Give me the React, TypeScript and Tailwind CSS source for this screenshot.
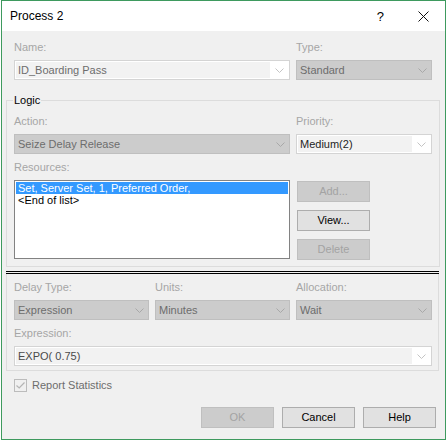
import React from "react";

type ComboKind = "disabled" | "white";

function Chevron({ color }: { color: string }) {
  return (
    <svg width="9" height="5" viewBox="0 0 9 5" className="shrink-0">
      <path d="M0.5 0.5 L4.5 4.5 L8.5 0.5" fill="none" stroke={color} strokeWidth="1" />
    </svg>
  );
}

function Combo({ text, kind, w, textColor }: { text: string; kind: ComboKind; w: string; textColor?: string }) {
  if (kind === "disabled") {
    return (
      <div className={`${w} h-[20px] shrink-0 border border-[#bfbfbf] bg-[#cccccc] flex items-center`}>
        <span className="flex-1 pl-[3px] text-[#6d6d6d] truncate">{text}</span>
        <div className="w-[18px] flex justify-center">
          <Chevron color="#a8a8a8" />
        </div>
      </div>
    );
  }
  return (
    <div className={`${w} h-[20px] shrink-0 border border-[#d4d4d4] bg-white flex items-center p-[1px]`}>
      <span className={`flex-1 h-full bg-[#f2f2f2] pl-[2px] flex items-center truncate ${textColor ?? "text-[#1e1e1e]"}`}>
        {text}
      </span>
      <div className="w-[18px] flex justify-center">
        <Chevron color="#c4c4c4" />
      </div>
    </div>
  );
}

function Btn({ label, disabled }: { label: string; disabled?: boolean }) {
  return (
    <div
      className={
        disabled
          ? "w-[73px] h-[21px] shrink-0 border border-[#bfbfbf] bg-[#cccccc] text-[#a3a3a3] flex items-center justify-center"
          : "w-[73px] h-[21px] shrink-0 border border-[#adadad] bg-[#e1e1e1] text-black flex items-center justify-center"
      }
    >
      {label}
    </div>
  );
}

function Label({ children }: { children: React.ReactNode }) {
  return <div className="h-[13px] leading-[13px] text-[#a6a6a6]">{children}</div>;
}

export default function App() {
  return (
    <div className="w-[447px] h-[442px] bg-white text-[11px] leading-[13px]" style={{ fontFamily: '"Liberation Sans", Arial, sans-serif' }}>
      <div className="ml-[1px] w-[445px] h-[440px] border border-[#3e9a5e] flex flex-col">
        {/* title bar */}
        <div className="h-[30px] bg-white flex items-center pl-[8px] pr-[16px]">
          <span className="text-[12px] text-black">Process 2</span>
          <span className="ml-auto text-[13px] text-black">?</span>
          <svg width="11" height="11" viewBox="0 0 11 11" className="ml-[34px]">
            <path d="M0.5 0.5 L10.5 10.5 M10.5 0.5 L0.5 10.5" stroke="#111" strokeWidth="1" />
          </svg>
        </div>

        <div className="flex-1 bg-[#f0f0f0] flex flex-col">
          {/* name / type */}
          <div className="pl-[12px] pt-[10px] flex gap-[6px]">
            <div className="flex flex-col gap-[6px]">
              <Label>Name:</Label>
              <Combo text="ID_Boarding Pass" kind="white" w="w-[276px]" textColor="text-[#6d6d6d]" />
            </div>
            <div className="flex flex-col gap-[6px]">
              <Label>Type:</Label>
              <Combo text="Standard" kind="disabled" w="w-[136px]" />
            </div>
          </div>

          {/* logic group */}
          <fieldset className="ml-[4px] mt-[14px] w-[433px] border border-[#dcdcdc] px-[7px] pb-[6px]">
            <legend className="h-[13px] leading-[13px] text-black px-[1px] -ml-[1px]">Logic</legend>
            <div className="mt-[8px] flex gap-[6px]">
              <div className="flex flex-col gap-[6px]">
                <Label>Action:</Label>
                <Combo text="Seize Delay Release" kind="disabled" w="w-[276px]" />
              </div>
              <div className="flex flex-col gap-[6px]">
                <Label>Priority:</Label>
                <Combo text="Medium(2)" kind="white" w="w-[136px]" />
              </div>
            </div>
            <div className="mt-[7px]">
              <Label>Resources:</Label>
            </div>
            <div className="mt-[6px] flex">
              <div className="w-[276px] h-[79px] border border-[#828282] bg-white p-[1px]">
                <div className="h-[12px] leading-[12px] bg-[#3399ff] text-white pl-[2px]">Set, Server Set, 1, Preferred Order,</div>
                <div className="h-[13px] leading-[13px] text-black pl-[2px]">&lt;End of list&gt;</div>
              </div>
              <div className="ml-[7px] pt-[1px] flex flex-col gap-[8px]">
                <Btn label="Add..." disabled />
                <Btn label="View..." />
                <Btn label="Delete" disabled />
              </div>
            </div>
          </fieldset>

          {/* double separator */}
          <div className="ml-[4px] mt-[4px] w-[433px] h-[3px] border-y border-black" />

          {/* delay group */}
          <div className="ml-[4px] w-[433px] border-x border-b border-[#dcdcdc] px-[7px] pt-[7px] pb-[4px]">
            <div className="flex gap-[6px]">
              <div className="flex flex-col gap-[6px]">
                <Label>Delay Type:</Label>
                <Combo text="Expression" kind="disabled" w="w-[135px]" />
              </div>
              <div className="flex flex-col gap-[6px]">
                <Label>Units:</Label>
                <Combo text="Minutes" kind="disabled" w="w-[135px]" />
              </div>
              <div className="flex flex-col gap-[6px]">
                <Label>Allocation:</Label>
                <Combo text="Wait" kind="disabled" w="w-[136px]" />
              </div>
            </div>
            <div className="mt-[7px] flex flex-col gap-[6px]">
              <Label>Expression:</Label>
              <Combo text="EXPO( 0.75)" kind="white" w="w-[418px]" textColor="text-[#4a4a4a]" />
            </div>
          </div>

          {/* report statistics */}
          <div className="mt-[8px] pl-[12px] flex items-center gap-[5px]">
            <div className="w-[13px] h-[13px] border border-[#bcbcbc] bg-[#f0f0f0] flex items-center justify-center">
              <svg width="9" height="7" viewBox="0 0 9 7">
                <path d="M0.5 3.5 L3.2 6 L8.5 0.5" fill="none" stroke="#b4b4b4" strokeWidth="1.2" />
              </svg>
            </div>
            <span className="text-[#6d6d6d]">Report Statistics</span>
          </div>

          {/* dialog buttons */}
          <div className="mt-[15px] pr-[9px] flex justify-end gap-[8px]">
            <Btn label="OK" disabled />
            <Btn label="Cancel" />
            <Btn label="Help" />
          </div>
        </div>
      </div>
    </div>
  );
}
